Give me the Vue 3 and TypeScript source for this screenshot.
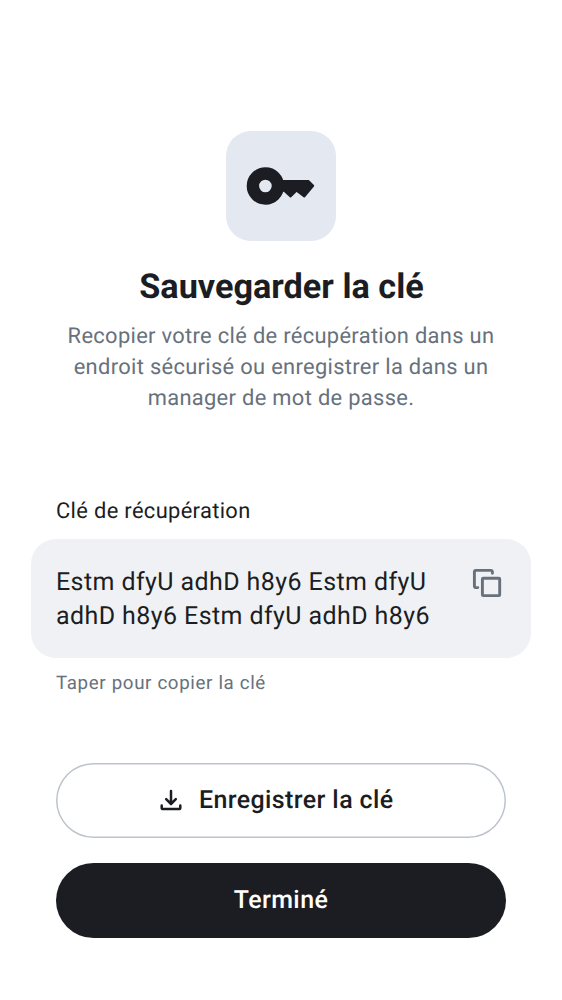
<script setup lang="ts">
const recoveryKey: string[] = ['Estm dfyU adhD h8y6 Estm dfyU', 'adhD h8y6 Estm dfyU adhD h8y6']
const intro: string[] = [
  'Recopier votre clé de récupération dans un',
  'endroit sécurisé ou enregistrer la dans un',
  'manager de mot de passe.',
]
</script>

<template>
  <main class="screen">
    <div class="badge">
      <svg width="70" height="40" viewBox="0 0 70 40">
        <circle cx="19.400" cy="20" r="12.500" fill="none" stroke="#1b1d22" stroke-width="12.400" />
        <path
          fill="#1b1d22"
          stroke="#1b1d22"
          stroke-width="2"
          stroke-linejoin="round"
          d="M33 15H62.400L67.200 19.800L58.200 30.500L50.600 24.600L44.500 30.500L38.200 24.800H33Z"
        />
      </svg>
    </div>
    <h1>Sauvegarder la clé</h1>
    <p class="intro"><span v-for="line in intro" :key="line">{{ line }}</span></p>
    <section class="field">
      <label>Clé de récupération</label>
      <div class="box">
        <p class="key"><span v-for="line in recoveryKey" :key="line">{{ line }}</span></p>
        <svg class="copy" width="30" height="30" viewBox="0 0 30 30" fill="none" stroke="#67717c" stroke-width="2.900" stroke-linecap="round" stroke-linejoin="round">
          <path d="M5.800 19.600H3.900a1.500 1.500 0 0 1-1.500-1.500V3.900a1.500 1.500 0 0 1 1.500-1.500H18.900a1.500 1.500 0 0 1 1.500 1.500V5.200" />
          <rect x="10.400" y="10.200" width="17.300" height="17.400" rx="0.800" />
        </svg>
      </div>
      <small>Taper pour copier la clé</small>
    </section>
    <div class="actions">
      <button class="outline">
        <svg width="22" height="24" viewBox="0 0 22 24" fill="none" stroke="#1b1d22" stroke-width="2.500" stroke-linecap="round" stroke-linejoin="round">
          <path d="M11 2V14M6.200 10.200L11 15L15.800 10.200M1.700 16.500V18.900a1.200 1.200 0 0 0 1.200 1.200H19.100a1.200 1.200 0 0 0 1.200-1.200V16.500" />
        </svg>
        <span>Enregistrer la clé</span>
      </button>
      <button class="filled">Terminé</button>
    </div>
  </main>
</template>

<style>
body { background: #fff; }
</style>
<style scoped>
.screen {
  box-sizing: border-box;
  height: 1000px;
  padding: 131px 31px 0;
  display: flex;
  flex-direction: column;
  align-items: center;
  font-family: Roboto, Inter, sans-serif;
  text-rendering: geometricPrecision;
  color: #1b1d22;
}
.badge {
  width: 110px;
  height: 109.500px;
  border-radius: 25px;
  background: #e3e8f1;
  display: flex;
  align-items: center;
  justify-content: center;
}
h1 { margin: 25.500px 0 0 1px; font-size: 34.250px; line-height: 42px; font-weight: 700; white-space: nowrap; }
.intro { margin: 13px 0 0; font-size: 21.860px; line-height: 31.220px; letter-spacing: 0.330px; color: #67717c; text-align: center; }
.intro span, .key span { display: block; white-space: nowrap; }
.field { width: 500px; margin-top: 81.250px; display: flex; flex-direction: column; }
label { margin-left: 25px; font-size: 21.860px; line-height: 31px; letter-spacing: 0.350px; }
.box {
  box-sizing: border-box;
  height: 118.500px;
  margin-top: 12.200px;
  padding: 26.500px 29px 0 25px;
  border-radius: 25px;
  background: #f0f1f5;
  display: flex;
  justify-content: space-between;
}
.key { margin: 0; font-size: 24.980px; line-height: 34px; letter-spacing: 0.420px; }
.copy { margin-top: 2px; }
small { margin: 12.800px 0 0 25px; font-size: 18.730px; line-height: 27px; letter-spacing: 0.650px; color: #67717c; }
.actions { width: 450px; margin-top: 65.200px; display: flex; flex-direction: column; gap: 25px; }
button {
  box-sizing: border-box;
  height: 75px;
  border: 0;
  border-radius: 38px;
  padding: 2px 0 0;
  display: flex;
  align-items: center;
  justify-content: center;
  gap: 16.500px;
  font: 500 24.980px/34px Roboto, sans-serif;
  letter-spacing: 0.400px;
  text-rendering: geometricPrecision;
  color: #1b1d22;
}
.outline { padding-right: 8px; box-shadow: inset 0 0 0 1.500px #bdc3cc; background: #fff; }
.filled { background: #1b1d22; color: #fff; }
</style>
